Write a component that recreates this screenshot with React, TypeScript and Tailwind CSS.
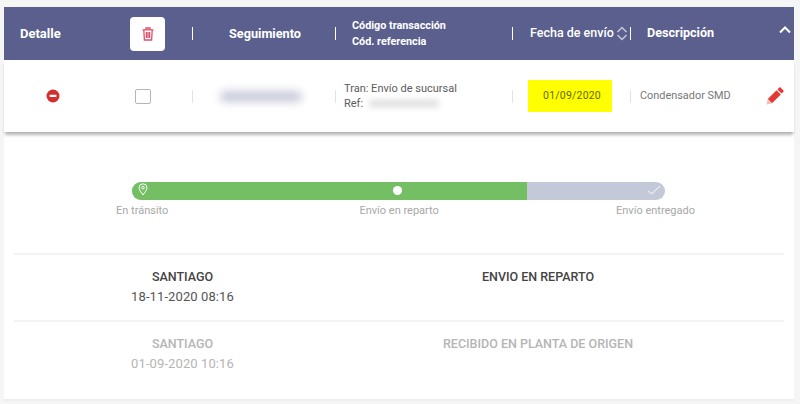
import React from "react";

const Sep = ({ h = "h-[13px]", c = "bg-white" }: { h?: string; c?: string }) => (
  <div className={`w-px shrink-0 ${h} ${c}`} />
);

function TrackRow({ city, date, status, muted }: { city: string; date: string; status: string; muted?: boolean }) {
  const tone = muted ? "text-[#b5b5b5]" : "text-[#444444]";
  return (
    <div className="flex h-[67px] border-t-2 border-[#f3f3f3] pt-[12px] text-[13px] leading-[20px]">
      <div className={`w-[337px] shrink-0 text-center ${tone}`}>
        <div className="text-[12.5px] font-medium">{city}</div>
        <div className={`${muted ? "" : "text-[#555555]"} tracking-[0.1px]`}>{date}</div>
      </div>
      <div className={`w-[374px] text-center text-[12.5px] font-medium ${tone}`}>{status}</div>
    </div>
  );
}

export default function App() {
  return (
    <div
      className="h-[404px] w-[800px] overflow-hidden bg-[#f5f5f5] pl-[4px] pr-[6px] pt-[7px]"
      style={{ fontFamily: "Roboto, sans-serif" }}
    >
      <div className="flex h-[53px] items-center bg-[#5a5f8e] text-white">
        <div className="w-[96px] shrink-0 pl-[16px] text-[13px] font-bold">Detalle</div>
        <div className="flex w-[93px] shrink-0 items-center">
          <div className="ml-[30px] flex h-[34px] w-[35px] items-center justify-center rounded-[4px] bg-white">
            <svg width="12" height="14" viewBox="0 0 12 14" fill="none" stroke="#e0506a" strokeWidth="1.3">
              <path d="M0.5 2.8h11M4 2.5V1h4v1.5M1.8 3l.6 10h7.2l.6-10" />
              <path d="M4.4 5v6M6 5v6M7.6 5v6" />
            </svg>
          </div>
          <div className="ml-auto"><Sep /></div>
        </div>
        <div className="flex w-[143px] shrink-0 items-center">
          <div className="flex-1 pl-[2px] text-center text-[12.7px] font-bold">Seguimiento</div>
          <Sep />
        </div>
        <div className="flex w-[177px] shrink-0 items-center">
          <div className="flex-1 pl-[16px] text-[10.8px] font-bold leading-[16px]">
            <div>Código transacción</div>
            <div>Cód. referencia</div>
          </div>
          <Sep />
        </div>
        <div className="flex w-[118px] shrink-0 items-center">
          <div className="flex-1 whitespace-nowrap pl-[17px] text-[12.5px] font-medium">Fecha de envío</div>
          <svg width="12" height="15" viewBox="0 0 12 15" fill="none" stroke="#c4c8d8" strokeWidth="1.5" className="mr-[2px]">
            <path d="M1.5 6L6 1.5 10.5 6M1.5 9L6 13.5 10.5 9" />
          </svg>
          <Sep />
        </div>
        <div className="flex flex-1 items-center">
          <div className="flex-1 pl-[16px] text-[12.6px] font-bold">Descripción</div>
          <svg width="12" height="8" viewBox="0 0 12 8" fill="none" stroke="#ffffff" strokeWidth="2" className="mb-[7px] mr-[3px]">
            <path d="M1 6.5L6 1.5l5 5" />
          </svg>
        </div>
      </div>

      <div className="relative flex h-[72px] items-center bg-white text-[11px] text-[#666666] shadow-[0_4px_3px_-1px_rgba(0,0,0,0.28)]">
        <div className="flex w-[96px] shrink-0 justify-center pl-[2px]">
          <svg width="14" height="14" viewBox="0 0 14 14">
            <circle cx="7" cy="7" r="6.5" fill="#d32f2f" />
            <rect x="3.5" y="5.8" width="7" height="2.2" rx="0.8" fill="#ffffff" />
          </svg>
        </div>
        <div className="flex w-[93px] shrink-0 items-center">
          <div className="ml-[35px] h-[15px] w-[16px] rounded-[2px] border-[1.5px] border-[#b5b5b5] bg-white" />
          <div className="ml-auto"><Sep c="bg-[#e3e3e3]" /></div>
        </div>
        <div className="flex w-[143px] shrink-0 items-center">
          <div className="flex flex-1 justify-start pl-[27px]">
            <div className="h-[11px] w-[82px] rounded-full bg-[#c9cadb] blur-[4px]" />
          </div>
          <Sep c="bg-[#e3e3e3]" />
        </div>
        <div className="flex w-[177px] shrink-0 items-center">
          <div className="flex-1 pl-[8px] leading-[15px] text-[#5c5c5c]">
            <div>Tran: Envío de sucursal</div>
            <div className="flex items-center">
              Ref:
              <span className="ml-[6px] h-[7px] w-[70px] rounded-full bg-[#dcdcdc] blur-[3px]" />
            </div>
          </div>
          <Sep c="bg-[#e3e3e3]" />
        </div>
        <div className="flex w-[118px] shrink-0 items-center">
          <div className="ml-[15px] flex h-[32px] w-[84px] items-center justify-center bg-[#ffff00] text-[10.5px] tracking-[0.2px] text-[#666600]">
            <span className="pl-[4px]">01/09/2020</span>
          </div>
          <div className="ml-auto"><Sep c="bg-[#e3e3e3]" /></div>
        </div>
        <div className="flex flex-1 items-center">
          <div className="flex-1 whitespace-nowrap pl-[9px] text-[10.9px] text-[#777777]">Condensador SMD</div>
          <svg width="18" height="18" viewBox="0 0 18 18" className="mr-[10px]">
            <path d="M13.2 0.6a1 1 0 0 1 1.4 0l2.8 2.8a1 1 0 0 1 0 1.4L15.6 6.6 11.4 2.4z" fill="#e53935" />
            <path d="M10.6 3.2l4.2 4.2L6 16.2 1.8 12z" fill="#e53935" />
            <path d="M1.6 12.6l3.8 3.8-4.8 1z" fill="#f6b7b0" />
          </svg>
        </div>
      </div>

      <div className="mt-[1px] h-[268px] border-b-2 border-[#eeeeee] bg-white px-[10px]">
        <div className="h-[120px] pl-[118px] pt-[49px]">
          <div className="relative flex h-[18px] w-[533px] items-center overflow-hidden rounded-full bg-[#c3c9d8]">
            <div className="h-full w-[395px] bg-[#74bf63]" />
            <svg width="10" height="13" viewBox="0 0 10 13" fill="none" stroke="#ffffff" strokeWidth="1" className="absolute left-[6px] top-[1px]">
              <path d="M5 12C3 9 1 7 1 4.8a4 4 0 0 1 8 0C9 7 7 9 5 12z" />
              <circle cx="5" cy="4.7" r="1.3" />
            </svg>
            <div className="absolute left-[261px] top-[4px] h-[9px] w-[9px] rounded-full bg-white" />
            <svg width="14" height="10" viewBox="0 0 14 10" fill="none" stroke="#ffffff" strokeWidth="1" className="absolute left-[515px] top-[3px]">
              <path d="M1 5.5L4.5 9 13 1" />
            </svg>
          </div>
          <div className="mt-[2px] text-[11px] leading-[17px] text-[#a8a8a8]">
            <div className="-ml-[16px] flex w-[579px] justify-between">
              <span>En tránsito</span>
              <span className="pl-[14px]">Envío en reparto</span>
              <span>Envío entregado</span>
            </div>
          </div>
        </div>
        <TrackRow city="SANTIAGO" date="18-11-2020 08:16" status="ENVIO EN REPARTO" />
        <TrackRow city="SANTIAGO" date="01-09-2020 10:16" status="RECIBIDO EN PLANTA DE ORIGEN" muted />
      </div>
    </div>
  );
}
